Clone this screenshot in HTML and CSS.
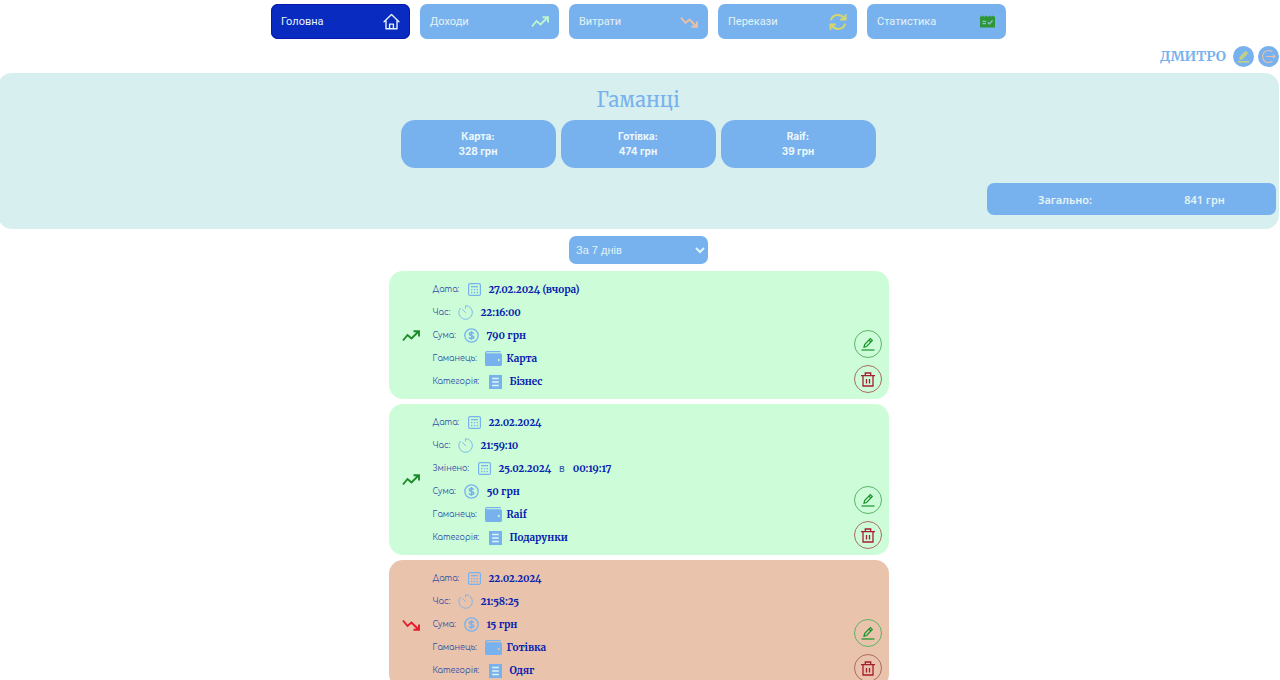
FILE: index.html
```html
<!DOCTYPE html>
<html lang="uk">
<head>
<meta charset="utf-8">
<meta name="viewport" content="width=device-width, initial-scale=1">
<title>Гаманці</title>
<link rel="stylesheet" href="styles.css">
</head>
<body>
<svg class="sprite" aria-hidden="true">
  <symbol id="home" viewBox="0 0 16 16"><path d="M1 8.2 8 1.5l7 6.7M2.8 7v7.8h10.4V7M6.2 14.5v-4h3.6v4" fill="none" stroke="currentColor" stroke-width="1.3" stroke-linejoin="round" stroke-linecap="round"/></symbol>
  <symbol id="up" viewBox="0 0 18 12"><path d="M1 10.5 5.5 5l4 3.5L16 2M11.5 1.2H17v5.3" fill="none" stroke="currentColor" stroke-width="1.9"/></symbol>
  <symbol id="down" viewBox="0 0 18 12"><path d="M1 1.5 5.5 7l4-3.5L16 10M11.5 10.8H17V5.5" fill="none" stroke="currentColor" stroke-width="1.9"/></symbol>
  <symbol id="swap" viewBox="0 0 18 18"><path d="M1.8 7.2C3 3.6 5.7 2 9 2c2.600 0 4.600 1.100 6.200 3.300M16.200 10.800C15 14.400 12.300 16 9 16c-2.600 0-4.600-1.100-6.200-3.300M16.500 1.200v5.300h-5.300M1.500 16.800v-5.300h5.300" fill="none" stroke="currentColor" stroke-width="2"/></symbol>
  <symbol id="stats" viewBox="0 0 16 13"><path d="M.5 1.500h2V.7h1.300v.8h2.400V.7h1.300v.8h2V.7h1.300v.8h1.500V.7h1.300v.8h1.900v11H.5z" fill="currentColor"/><path d="M3 6.300h3.500M3 8.700h3.500M8.300 7.200l1.700 1.700 3-3.400" fill="none" stroke="#8cc6d0" stroke-width="1.300"/></symbol>
  <symbol id="pencil" viewBox="0 0 14 14"><path d="M3 10.200l.6-2.700L9.300 1.500l2 2-5.700 6zM7.900 3l2 2" fill="none" stroke="currentColor" stroke-width="1.200"/><path d="M.5 13h13" stroke="currentColor" stroke-width="1.200"/></symbol>
  <symbol id="pencil-solid" viewBox="0 0 14 14"><path d="M3 10.200l.6-2.900L9.300 1.300l2.200 2.200-5.800 6z" fill="currentColor" fill-opacity=".7" stroke="currentColor"/><path d="M1 12.800h12" stroke="currentColor" stroke-width="1.400"/></symbol>
  <symbol id="exit" viewBox="0 0 14 14"><path d="M10.500 2.600A5.600 5.600 0 1 0 10.500 11.400M5 7h8M11.200 5.200 13 7l-1.800 1.800" fill="none" stroke="currentColor" stroke-width="1.100"/></symbol>
  <symbol id="trash" viewBox="0 0 14 15"><path d="M0 3.700h14M4.300 3.500V1h5.400v2.500M2 4v10h10V4M5.500 7v4.500M8.500 7v4.500" fill="none" stroke="currentColor" stroke-width="1.300"/></symbol>
  <symbol id="calendar" viewBox="0 0 13 13"><rect x=".6" y=".6" width="11.800" height="11.800" rx="1.500" fill="none" stroke="currentColor" stroke-width="1.200"/><path d="M3 3.700h7" stroke="currentColor" stroke-width="1.300"/><path d="M3 6.700h7M3 9.500h7" stroke="currentColor" stroke-width="1.300" stroke-dasharray="1.400"/></symbol>
  <symbol id="clock" viewBox="0 0 15 15"><path d="M7.500 3.500V.7A6.800 6.800 0 1 1 2.500 3M4.300 4.300l3.500 3.500" fill="none" stroke="currentColor" stroke-width=".9"/></symbol>
  <symbol id="coin" viewBox="0 0 15 15"><circle cx="7.500" cy="7.500" r="6.700" fill="none" stroke="currentColor" stroke-width="1.300"/><path d="M9.800 5.700C9.400 4.700 8.600 4.500 7.500 4.500c-1.300 0-2.200.5-2.200 1.400 0 2.200 4.600.9 4.600 3.200 0 1-1 1.500-2.400 1.500-1.200 0-2.200-.4-2.500-1.400M7.500 3v9" fill="none" stroke="currentColor" stroke-width="1.500"/></symbol>
  <symbol id="wallet" viewBox="0 0 17 15"><path d="M2 0h13q.8 0 .8 1.200H2.200q-.8 0-.8.600 0 .5.800.5H15.500q1.500 0 1.500 1.500v9.700q0 1.500-1.500 1.500H1.500Q0 15 0 13.500V2Q0 0 2 0zm11.800 8a1 1 0 1 0 .01 0z" fill="currentColor" fill-rule="evenodd"/></symbol>
  <symbol id="list" viewBox="0 0 13 14"><path d="M0 0h13v14H0z" fill="currentColor"/><path d="M3.200 3.500h6.600M3.200 7h6.600M3.200 10.500h6.600" stroke="#dff5f2" stroke-width="1.400"/></symbol>
</svg>

<nav class="nav">
  <a class="nav-link active" href="#home">Головна<svg class="nav-icon" width="17" height="17"><use href="#home"/></svg></a>
  <a class="nav-link" href="#income">Доходи<svg class="nav-icon mint" width="18" height="12"><use href="#up"/></svg></a>
  <a class="nav-link" href="#costs">Витрати<svg class="nav-icon peach" width="18" height="12"><use href="#down"/></svg></a>
  <a class="nav-link" href="#transfers">Перекази<svg class="nav-icon yellow" width="18" height="18"><use href="#swap"/></svg></a>
  <a class="nav-link" href="#stats">Статистика<svg class="nav-icon green" width="17" height="13"><use href="#stats"/></svg></a>
</nav>

<header class="user">
  <span class="user-name">ДМИТРО</span>
  <button class="user-btn yellow" aria-label="Редагувати профіль"><svg width="13" height="13"><use href="#pencil-solid"/></svg></button>
  <button class="user-btn peach" aria-label="Вийти"><svg width="15" height="15"><use href="#exit"/></svg></button>
</header>

<section class="wallets">
  <h1 class="wallets-title">Гаманці</h1>
  <div class="wallet-list">
    <div class="wallet"><span>Карта:</span><span>328 грн</span></div>
    <div class="wallet"><span>Готівка:</span><span>474 грн</span></div>
    <div class="wallet"><span>Raif:</span><span>39 грн</span></div>
  </div>
  <div class="total"><span>Загально:</span><span>841 грн</span></div>
</section>

<main class="feed">
  <select class="period" aria-label="Період"><option>За 7 днів</option></select>

  <article class="entry income">
    <svg class="trend" width="18" height="12"><use href="#up"/></svg>
    <dl class="details">
      <div class="row"><dt class="w-date">Дата:</dt><dd><svg width="13" height="13"><use href="#calendar"/></svg><b>27.02.2024 (вчора)</b></dd></div>
      <div class="row"><dt class="w-time">Час:</dt><dd><svg width="15" height="15"><use href="#clock"/></svg><b>22:16:00</b></dd></div>
      <div class="row"><dt class="w-sum">Сума:</dt><dd><svg width="15" height="15"><use href="#coin"/></svg><b>790 грн</b></dd></div>
      <div class="row tight"><dt class="w-wallet">Гаманець:</dt><dd><svg width="17" height="15"><use href="#wallet"/></svg><b>Карта</b></dd></div>
      <div class="row"><dt class="w-category">Категорія:</dt><dd><svg width="13" height="14"><use href="#list"/></svg><b>Бізнес</b></dd></div>
    </dl>
    <div class="actions">
      <button class="action edit" aria-label="Редагувати"><svg width="14" height="14"><use href="#pencil"/></svg></button>
      <button class="action delete" aria-label="Видалити"><svg width="14" height="15"><use href="#trash"/></svg></button>
    </div>
  </article>

  <article class="entry income">
    <svg class="trend" width="18" height="12"><use href="#up"/></svg>
    <dl class="details">
      <div class="row"><dt class="w-date">Дата:</dt><dd><svg width="13" height="13"><use href="#calendar"/></svg><b>22.02.2024</b></dd></div>
      <div class="row"><dt class="w-time">Час:</dt><dd><svg width="15" height="15"><use href="#clock"/></svg><b>21:59:10</b></dd></div>
      <div class="row"><dt class="w-changed">Змінено:</dt><dd><svg width="13" height="13"><use href="#calendar"/></svg><b>25.02.2024</b><span class="at">в</span><b>00:19:17</b></dd></div>
      <div class="row"><dt class="w-sum">Сума:</dt><dd><svg width="15" height="15"><use href="#coin"/></svg><b>50 грн</b></dd></div>
      <div class="row tight"><dt class="w-wallet">Гаманець:</dt><dd><svg width="17" height="15"><use href="#wallet"/></svg><b>Raif</b></dd></div>
      <div class="row"><dt class="w-category">Категорія:</dt><dd><svg width="13" height="14"><use href="#list"/></svg><b>Подарунки</b></dd></div>
    </dl>
    <div class="actions">
      <button class="action edit" aria-label="Редагувати"><svg width="14" height="14"><use href="#pencil"/></svg></button>
      <button class="action delete" aria-label="Видалити"><svg width="14" height="15"><use href="#trash"/></svg></button>
    </div>
  </article>

  <article class="entry cost">
    <svg class="trend" width="18" height="12"><use href="#down"/></svg>
    <dl class="details">
      <div class="row"><dt class="w-date">Дата:</dt><dd><svg width="13" height="13"><use href="#calendar"/></svg><b>22.02.2024</b></dd></div>
      <div class="row"><dt class="w-time">Час:</dt><dd><svg width="15" height="15"><use href="#clock"/></svg><b>21:58:25</b></dd></div>
      <div class="row"><dt class="w-sum">Сума:</dt><dd><svg width="15" height="15"><use href="#coin"/></svg><b>15 грн</b></dd></div>
      <div class="row tight"><dt class="w-wallet">Гаманець:</dt><dd><svg width="17" height="15"><use href="#wallet"/></svg><b>Готівка</b></dd></div>
      <div class="row"><dt class="w-category">Категорія:</dt><dd><svg width="13" height="14"><use href="#list"/></svg><b>Одяг</b></dd></div>
    </dl>
    <div class="actions">
      <button class="action edit" aria-label="Редагувати"><svg width="14" height="14"><use href="#pencil"/></svg></button>
      <button class="action delete" aria-label="Видалити"><svg width="14" height="15"><use href="#trash"/></svg></button>
    </div>
  </article>
</main>
</body>
</html>
```
FILE: styles.css
```css
* { box-sizing: border-box; }
html { scrollbar-width: none; }
body {
  margin: 0;
  padding: 4px 3px 0 0;
  background: #fff;
  font-family: Roboto, sans-serif;
}
button { padding: 0; font: inherit; cursor: pointer; }
.sprite { display: none; }

.nav { display: flex; justify-content: center; gap: 10px; }
.nav-link {
  display: flex;
  align-items: center;
  justify-content: space-between;
  width: 139px;
  height: 35px;
  padding: 0 10px;
  border-radius: 7px;
  background: #78b2ee;
  color: #e4f3f5;
  font-size: 11px;
  text-decoration: none;
}
.nav-link.active { background: #092bc0; box-shadow: inset 0 0 0 1px #0518b0; }
.mint { color: #bdf5cf; }
.peach { color: #e9bfa8; }
.yellow { color: #d6d66c; }
.green { color: #2e9639; }

.user {
  display: flex;
  align-items: center;
  justify-content: flex-end;
  gap: 4px;
  height: 34px;
  margin-right: -2px;
}
.user-name {
  margin-right: 3px;
  color: #78b2ee;
  font: bold 14px Merriweather, "Liberation Serif", serif;
}
.user-btn {
  display: grid;
  place-items: center;
  width: 21px;
  height: 21px;
  border: 0;
  border-radius: 50%;
  background: #78b2ee;
}

.wallets {
  margin: 0 -2px 7px;
  padding: 12px 3px 14px 2px;
  border-radius: 14px;
  background: #d7f0ef;
}
.wallets-title {
  margin: 0 0 5px;
  color: #78b2ee;
  font: 20px/30px Merriweather, "Liberation Serif", serif;
  text-align: center;
}
.wallet-list { display: flex; justify-content: center; gap: 5px; }
.wallet {
  display: flex;
  flex-direction: column;
  align-items: center;
  width: 155px;
  padding: 9px 0;
  border-radius: 14px;
  background: #78b2ee;
  color: #eef8fb;
  font: 700 10px/15px Inter, sans-serif;
}
.total {
  display: grid;
  grid-template-columns: 156px 1fr;
  align-items: center;
  width: 289px;
  height: 32px;
  margin: 15px 0 0 auto;
  border-radius: 7px;
  background: #78b2ee;
  color: #e4f3f5;
  font: 600 11px "Noto Sans", sans-serif;
  text-align: center;
}
.total span:last-child { padding-right: 10px; }

.feed { display: flex; flex-direction: column; align-items: center; gap: 5px; padding-bottom: 5px; }
.period {
  width: 139px;
  height: 28px;
  margin-bottom: 2px;
  padding: 0 0 0 3px;
  border: 0;
  border-radius: 7px;
  background: #78b2ee;
  color: #e4f3f5;
  font: 11px "Liberation Sans", sans-serif;
}
.entry {
  display: flex;
  align-items: center;
  width: 500px;
  max-width: 100%;
  padding: 7px 7px 6px 13px;
  border-radius: 14px;
}
.income { background: #cdfdd8; }
.cost { background: #e9c3ab; }
.trend { flex: none; margin-right: 13px; color: #1c8a26; }
.cost .trend { color: #e51c2b; }
.details { flex: 1; margin: 0; }
.row { display: flex; align-items: center; gap: 6px; height: 23px; }
.row dt { color: #3350a8; font: 8px Comfortaa, Lato, sans-serif; white-space: nowrap; }
.row dd {
  display: flex;
  align-items: center;
  gap: 8px;
  margin: 0;
  color: #0620b0;
  font: 10px Merriweather, "Liberation Serif", serif;
  font-variant-numeric: oldstyle-nums;
}
.row.tight, .row.tight dd { gap: 5px; }
.row svg { color: #78b2ee; }
.at { color: #3350a8; font-family: Roboto, sans-serif; }
.w-date { width: 29px; }
.w-time { width: 19px; }
.w-changed { width: 39px; }
.w-sum { width: 25px; }
.w-wallet { width: 47px; }
.w-category { width: 50px; }

.actions { display: flex; flex-direction: column; align-self: flex-end; gap: 7px; }
.action {
  display: grid;
  place-items: center;
  width: 28px;
  height: 28px;
  border: 1px solid;
  border-radius: 50%;
  background: none;
}
.edit { border-color: #5bb368; color: #16942a; }
.delete { border-color: #ac6a62; color: #a61c30; }
```
